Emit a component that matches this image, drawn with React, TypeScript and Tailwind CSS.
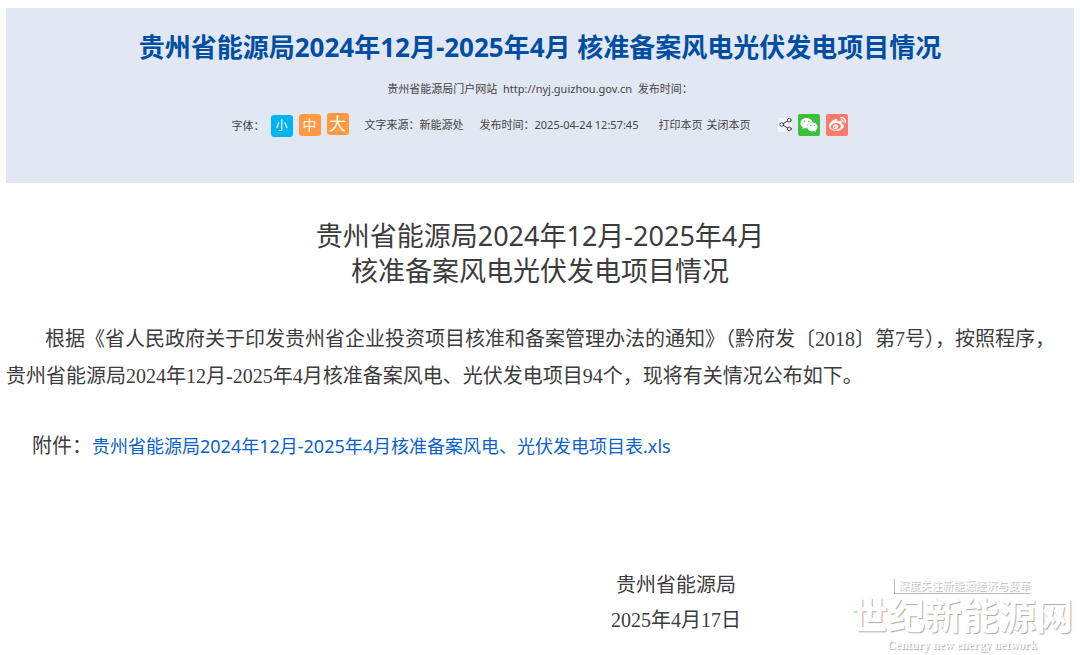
import React from "react";
import { Share2 } from "lucide-react";
import { FaWeibo, FaWeixin } from "react-icons/fa";

const sans = "font-['Noto_Sans','Noto_Sans_CJK_SC',sans-serif]";
const article = "font-['Liberation_Serif','Noto_Sans_CJK_SC',sans-serif]";

function Header() {
  return (
    <header className="bg-[#e1e7f3] pt-5 pb-[46px] text-center text-[#444]">
      <h1 className="text-[26px] leading-[38px] font-bold text-[#004ea2]">
        贵州省能源局2024年12月-2025年4月 核准备案风电光伏发电项目情况
      </h1>
      <p className="mt-3 text-[11px] leading-[22px] whitespace-pre">
        贵州省能源局门户网站  <a href="http://nyj.guizhou.gov.cn">http://nyj.guizhou.gov.cn</a>  发布时间：
      </p>
      <div className="mt-3 flex h-[25px] items-center justify-center gap-4 text-[11px] leading-[22px]">
        <div className="flex items-baseline gap-[6px]">
          <span>字体：</span>
          <button type="button" className="h-[22px] w-[22px] rounded-[3px] bg-[#00b4ef] text-[12px] leading-[22px] text-white">小</button>
          <button type="button" className="h-[22px] w-[22px] rounded-[3px] bg-[#ff9a43] text-[14px] leading-[22px] text-white">中</button>
          <button type="button" className="h-[22px] w-[22px] rounded-[3px] bg-[#ff9a43] text-[17px] leading-[22px] text-white">大</button>
        </div>
        <span>文字来源：新能源处</span>
        <span>发布时间：2025-04-24 12:57:45</span>
        <div className="ml-1 flex gap-1">
          <button type="button">打印本页</button>
          <button type="button">关闭本页</button>
        </div>
        <div className="ml-3 flex items-center gap-[6px]">
          <button type="button" aria-label="分享" className="flex h-[14px] w-[14px] items-center justify-center bg-[#f3f5f9]">
            <Share2 size={15} strokeWidth={1.6} className="shrink-0 text-[#444]" />
          </button>
          <button type="button" aria-label="微信" className="flex h-[22px] w-[22px] items-center justify-center rounded-[2px] bg-[#3bc03b] text-white">
            <FaWeixin size={18} />
          </button>
          <button type="button" aria-label="微博" className="flex h-[22px] w-[22px] items-center justify-center rounded-[2px] bg-[#fb7b6b] text-white">
            <FaWeibo size={17} />
          </button>
        </div>
      </div>
    </header>
  );
}

function Watermark() {
  return (
    <div className="absolute right-[7px] bottom-0 flex flex-col items-center font-['Liberation_Sans','Noto_Sans_CJK_SC',sans-serif] text-white [text-shadow:1px_1px_1px_#aaa]">
      <div className="border-b border-l border-[#bbb] pl-1 text-[11px] leading-[14px]">
        深度关注新能源经济与变革
      </div>
      <div className="mt-1 text-[37px] leading-10 font-bold">世纪新能源网</div>
      <div className="mb-[3px] font-['Liberation_Serif',serif] text-[12px] leading-[14px] font-bold">
        Century new energy network
      </div>
    </div>
  );
}

export default function App() {
  return (
    <div className={`relative min-h-screen bg-white px-[6px] pt-2 text-[#3c3c3c] ${sans}`}>
      <Header />
      <main>
        <h2 className="mt-[35px] text-center text-[27px] leading-[35px]">
          贵州省能源局2024年12月-2025年4月
          <br />
          核准备案风电光伏发电项目情况
        </h2>
        <p className={`mt-[33px] indent-[39px] text-[20px] leading-[37px] ${article}`}>
          根据《省人民政府关于印发贵州省企业投资项目核准和备案管理办法的通知》（黔府发〔2018〕第7号），按照程序，贵州省能源局2024年12月-2025年4月核准备案风电、光伏发电项目94个，现将有关情况公布如下。
        </p>
        <p className="mt-8 pl-[26px] text-[20px] leading-[37px]">
          附件：
          <a href="#attachment" className="text-[18px] text-[#0b62c9]">
            贵州省能源局2024年12月-2025年4月核准备案风电、光伏发电项目表.xls
          </a>
        </p>
        <div className={`mt-[103px] flex justify-end pr-[333px] text-center text-[20px] leading-[35px] ${article}`}>
          <p>
            贵州省能源局
            <br />
            2025年4月17日
          </p>
        </div>
      </main>
      <Watermark />
    </div>
  );
}
